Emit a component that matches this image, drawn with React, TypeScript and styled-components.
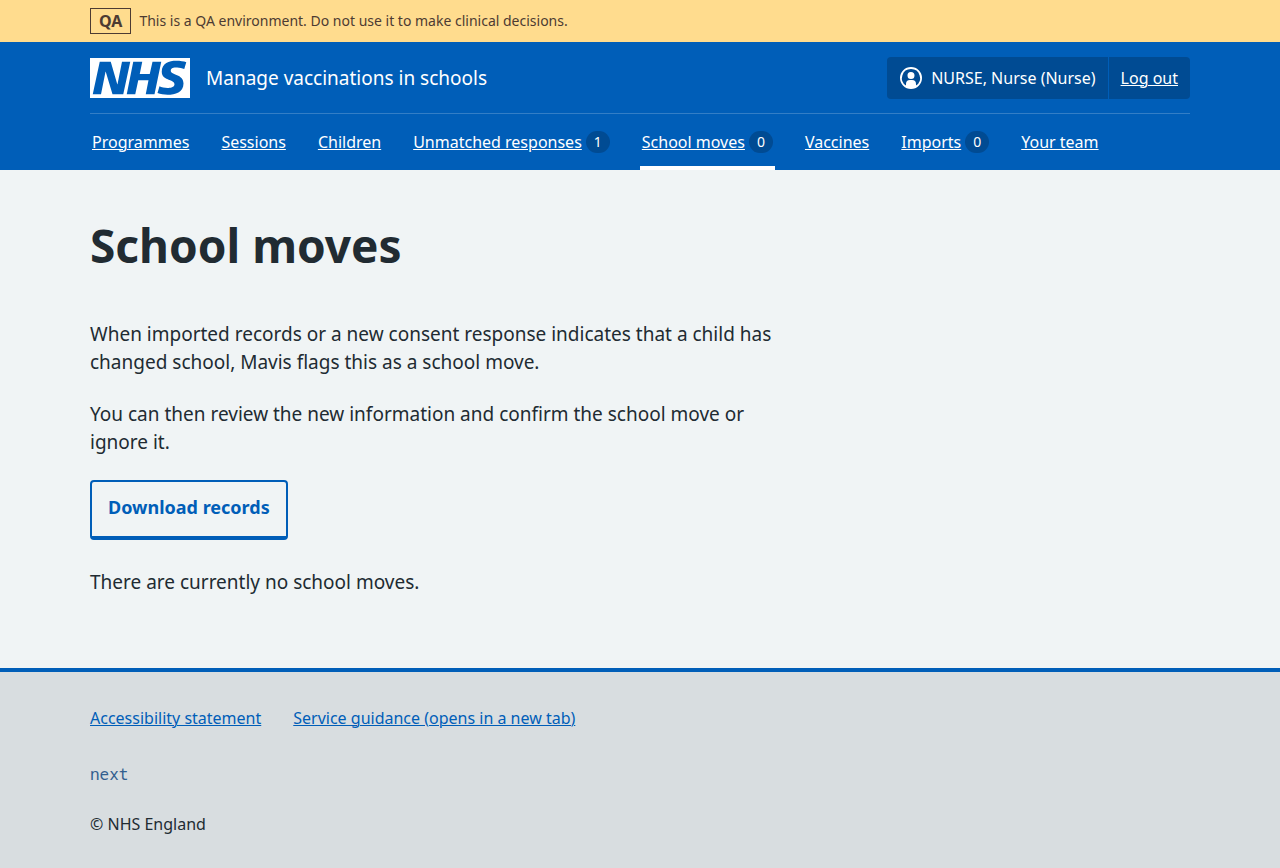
import React from "react";
import styled, { createGlobalStyle, css } from "styled-components";

const blue = "#005eb8";
const darkBlue = "#004b93";
const ink = "#212b32";

const GlobalStyle = createGlobalStyle`
  *, *::before, *::after { box-sizing: border-box; }
  body {
    margin: 0;
    background: #d8dde0;
    color: ${ink};
    font-family: "Noto Sans", "Open Sans", Arial, sans-serif;
    font-size: 19px;
    line-height: 28px;
  }
`;

const Container = styled.div`
  max-width: 1164px;
  margin: 0 auto;
  padding: 0 32px;
`;

const EnvironmentBanner = styled.aside`
  background: #ffdc8e;
  color: #4d3b32;
  font-size: 14px;
  line-height: 24px;
`;

const BannerContent = styled(Container)`
  display: flex;
  align-items: center;
  gap: 8px;
  padding-top: 8px;
  padding-bottom: 8px;
`;

const EnvironmentTag = styled.strong`
  border: 1px solid currentColor;
  padding: 0 8px;
  font-size: 16px;
  font-weight: 700;
`;

const Header = styled.header`
  background: ${blue};
  color: #fff;
`;

const HeaderTop = styled.div`
  display: flex;
  flex-wrap: wrap;
  align-items: center;
  justify-content: space-between;
  padding: 15px 0 14px;
  border-bottom: 1px solid #337ec6;
`;

const ServiceLink = styled.a`
  display: flex;
  align-items: center;
  gap: 16px;
  color: inherit;
  text-decoration: none;
`;

const Logo = styled.svg`
  display: block;
  width: 100px;
  height: 40px;
`;

const Account = styled.div`
  display: flex;
  overflow: hidden;
  border-radius: 4px;
  background: ${darkBlue};
  font-size: 16px;
  line-height: 24px;
`;

const AccountItem = styled.div`
  display: flex;
  align-items: center;
  gap: 8px;
  padding: 9px 12px;

  & + & {
    border-left: 1px solid ${blue};
  }
`;

const AccountIcon = styled.svg`
  width: 24px;
  height: 24px;
`;

const linkUnderline = css`
  text-decoration: underline;
  text-decoration-thickness: 1px;
  text-underline-offset: 1px;
`;

const HeaderLink = styled.a`
  color: #fff;
  ${linkUnderline}
`;

const NavList = styled.ul`
  display: flex;
  flex-wrap: wrap;
  gap: 0 28px;
  margin: 0;
  padding: 0;
  list-style: none;
  font-size: 16px;
  line-height: 24px;
`;

const NavItem = styled.li<{ $current?: boolean }>`
  display: flex;
  align-items: center;
  gap: 4px;
  padding: 16px 2px 12px;
  border-bottom: 4px solid ${(p) => (p.$current ? "#fff" : "transparent")};
`;

const Count = styled.span`
  min-width: 24px;
  border-radius: 12px;
  background: ${darkBlue};
  font-size: 14px;
  line-height: 22px;
  text-align: center;
`;

const Main = styled.main`
  background: #f0f4f5;
  padding: 40px 0 72px;
`;

const Heading = styled.h1`
  margin: 0 0 40px;
  font-size: 46px;
  line-height: 70px;
  font-weight: 700;
`;

const Column = styled.div`
  max-width: 704px;
`;

const Paragraph = styled.p`
  margin: 0 0 24px;
`;

const Button = styled.button`
  display: block;
  margin: 0 0 28px;
  padding: 11px 16px 15px;
  border: 2px solid ${blue};
  border-bottom-width: 4px;
  border-radius: 4px;
  background: transparent;
  color: ${blue};
  font: inherit;
  font-size: 18px;
  font-weight: 700;
`;

const Footer = styled.footer`
  border-top: 4px solid ${blue};
  padding: 32px 0;
  font-size: 16px;
  line-height: 28px;
`;

const FooterLinks = styled.ul`
  display: flex;
  flex-wrap: wrap;
  gap: 8px 32px;
  margin: 0 0 28px;
  padding: 0;
  list-style: none;
`;

const FooterLink = styled.a`
  color: ${blue};
  ${linkUnderline}
`;

const Release = styled.p`
  margin: 0 0 22px;
  color: #335f8f;
  font-family: "Noto Sans Mono", "DejaVu Sans Mono", "Liberation Mono", monospace;
`;

const LastLine = styled.p`
  margin: 0;
`;

const navigation: { label: string; count?: number; current?: boolean }[] = [
  { label: "Programmes" },
  { label: "Sessions" },
  { label: "Children" },
  { label: "Unmatched responses", count: 1 },
  { label: "School moves", count: 0, current: true },
  { label: "Vaccines" },
  { label: "Imports", count: 0 },
  { label: "Your team" },
];

export default function App() {
  return (
    <>
      <GlobalStyle />
      <EnvironmentBanner>
        <BannerContent>
          <EnvironmentTag>QA</EnvironmentTag>
          <span>This is a QA environment. Do not use it to make clinical decisions.</span>
        </BannerContent>
      </EnvironmentBanner>
      <Header>
        <Container>
          <HeaderTop>
            <ServiceLink href="#">
              <Logo viewBox="0 0 200 80" role="img" aria-label="NHS">
                <path
                  fill="#fff"
                  d="M200 0v80H0V0h200Zm-27.5 5.5c-14.5 0-29 5-29 22 0 10.2 7.7 13.5 14.7 16.3l.7.3c5.4 2 10.1 3.9 10.1 8.4 0 6.5-8.5 7.5-14 7.5s-12.5-1.5-16-3.5L135 70c5.5 2 13.5 3.5 20 3.5 15.5 0 32-4.5 32-22.5 0-19.5-25.5-16.5-25.5-25.5 0-5.5 5.5-6.5 12.5-6.5a35 35 0 0 1 14.5 3l4-13.5c-4.5-2-12-3-20-3Zm-131 2h-22l-14 65H22l9-45h.5l13.5 45h21.5l14-65H64l-9 45h-.5l-13-45Zm63 0h-18l-13 65h17l6-28H117l-5.5 28H129l13.5-65H125L119.5 32h-20l5-24.5Z"
                />
              </Logo>
              <span>Manage vaccinations in schools</span>
            </ServiceLink>
            <Account>
              <AccountItem>
                <AccountIcon viewBox="0 0 24 24" aria-hidden="true">
                  <path
                    fill="#fff"
                    d="M12 1a11 11 0 1 1 0 22 11 11 0 0 1 0-22Zm0 2a9 9 0 0 0-5 16.5V18a4 4 0 0 1 4-4h2a4 4 0 0 1 4 4v1.5A9 9 0 0 0 12 3Zm0 3a3.5 3.5 0 1 1-3.5 3.5A3.4 3.4 0 0 1 12 6Z"
                  />
                </AccountIcon>
                <span>NURSE, Nurse (Nurse)</span>
              </AccountItem>
              <AccountItem>
                <HeaderLink href="#">Log out</HeaderLink>
              </AccountItem>
            </Account>
          </HeaderTop>
          <nav aria-label="Menu">
            <NavList>
              {navigation.map(({ label, count, current }) => (
                <NavItem key={label} $current={current}>
                  <HeaderLink href="#" aria-current={current ? "page" : undefined}>
                    {label}
                  </HeaderLink>
                  {count !== undefined && <Count>{count}</Count>}
                </NavItem>
              ))}
            </NavList>
          </nav>
        </Container>
      </Header>
      <Main>
        <Container>
          <Heading>School moves</Heading>
          <Column>
            <Paragraph>
              When imported records or a new consent response indicates that a child has
              changed school, Mavis flags this as a school move.
            </Paragraph>
            <Paragraph>
              You can then review the new information and confirm the school move or
              ignore it.
            </Paragraph>
            <Button type="button">Download records</Button>
            <LastLine>There are currently no school moves.</LastLine>
          </Column>
        </Container>
      </Main>
      <Footer>
        <Container>
          <FooterLinks>
            <li>
              <FooterLink href="#">Accessibility statement</FooterLink>
            </li>
            <li>
              <FooterLink href="#">Service guidance (opens in a new tab)</FooterLink>
            </li>
          </FooterLinks>
          <Release>next</Release>
          <LastLine>© NHS England</LastLine>
        </Container>
      </Footer>
    </>
  );
}
